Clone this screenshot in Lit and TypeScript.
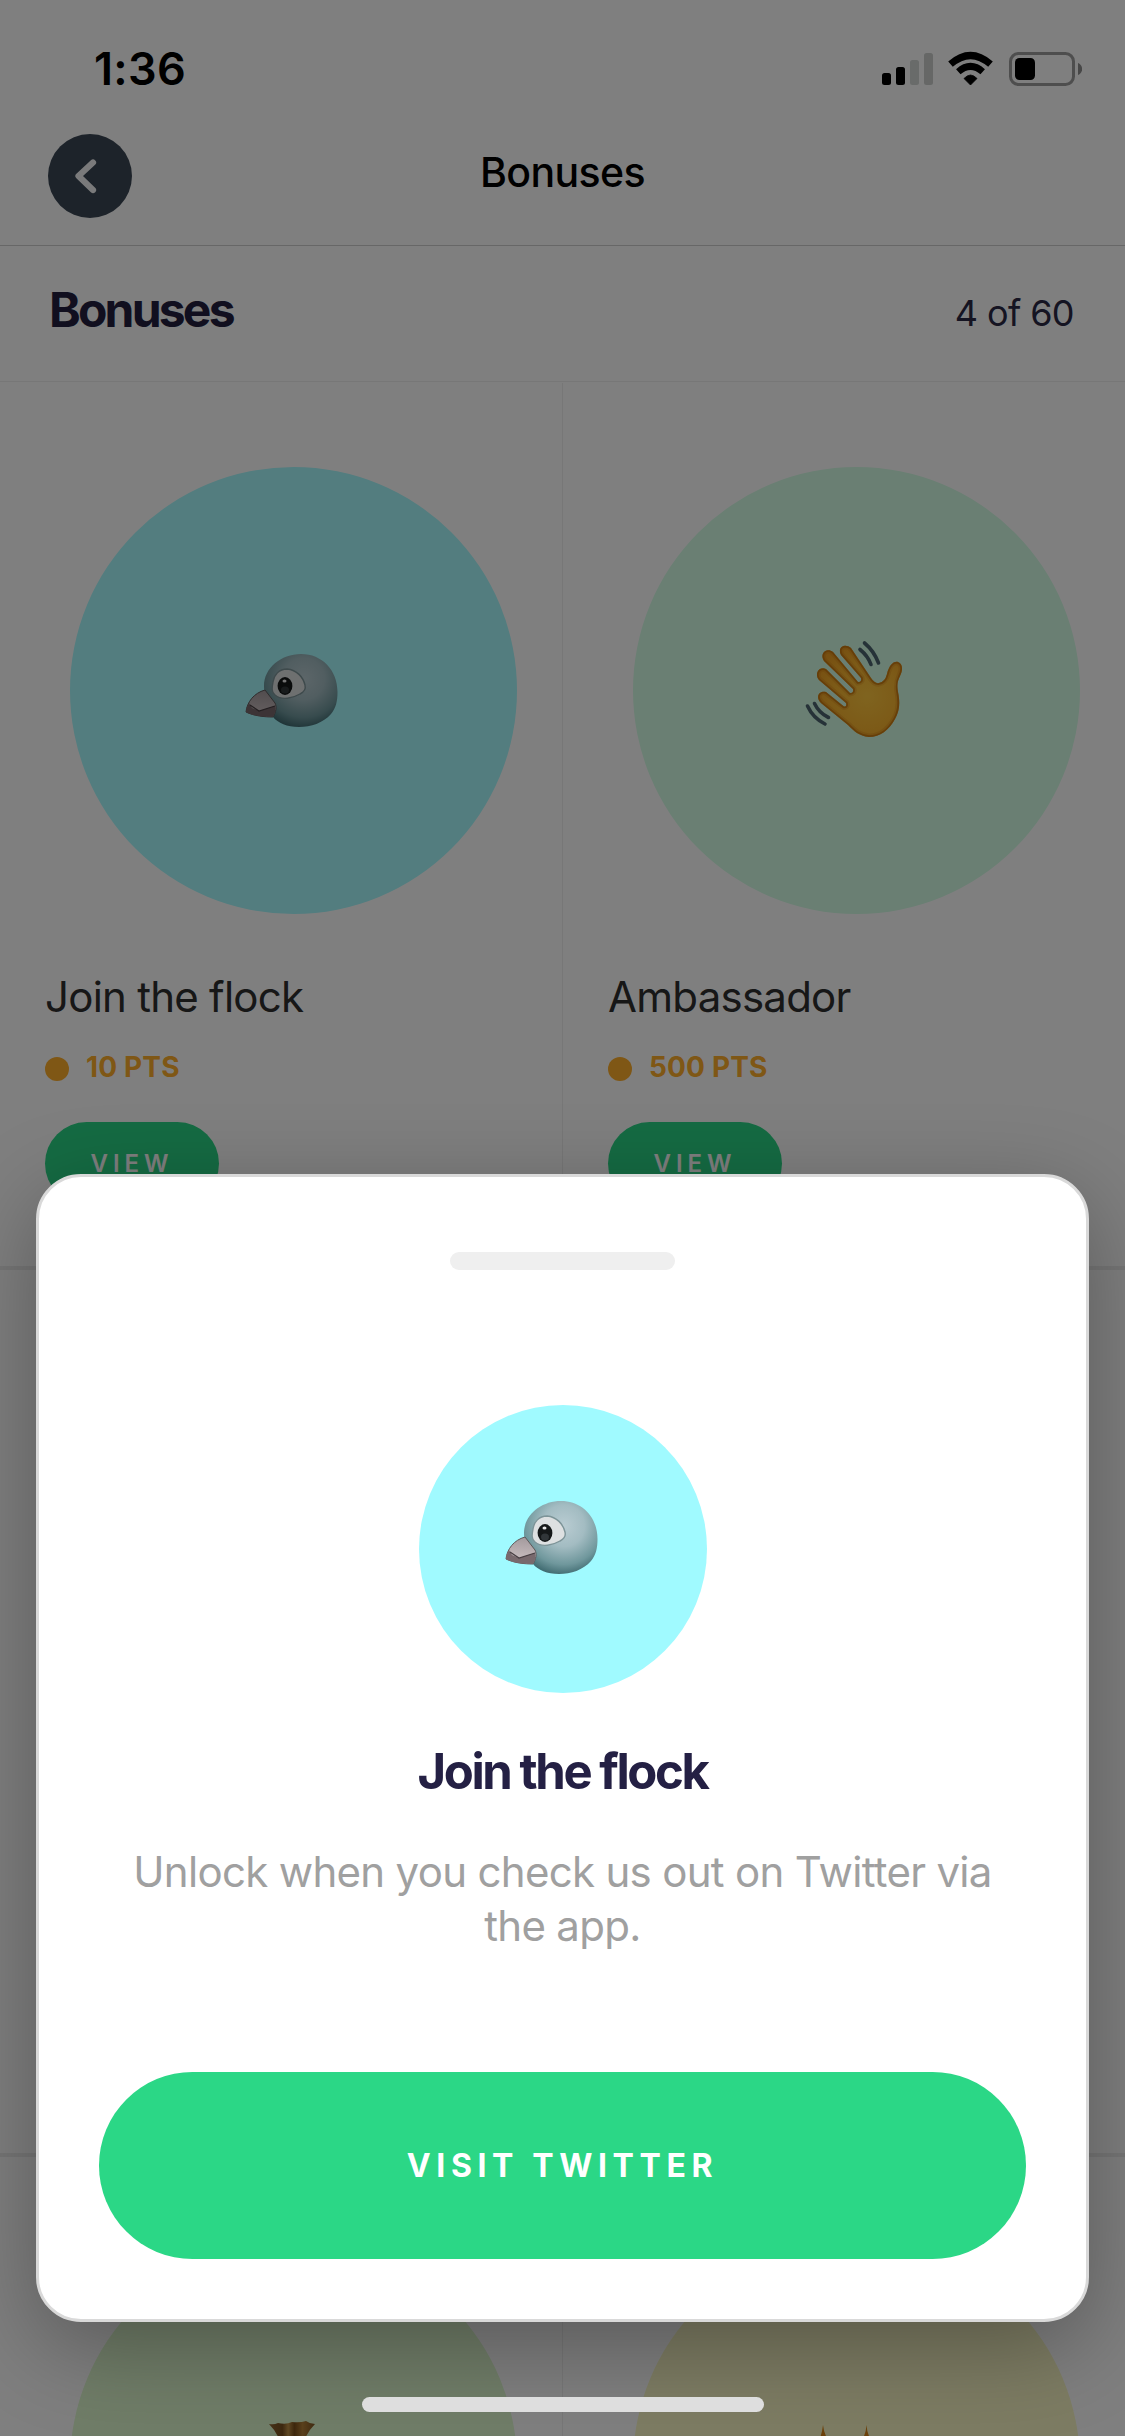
import { LitElement, html, css, svg } from "lit";
import { customElement, property } from "lit/decorators.js";

const bird = html`<svg class="bird" viewBox="0 0 94 76" width="94" height="76">
  <defs>
    <radialGradient id="head" cx="0.54" cy="0.34" r="0.68">
      <stop offset="0" stop-color="#b9ccd2" />
      <stop offset="0.42" stop-color="#a3bcc2" />
      <stop offset="0.78" stop-color="#6f979c" />
      <stop offset="1" stop-color="#3f6a70" />
    </radialGradient>
    <linearGradient id="beak" x1="0.5" y1="0" x2="0.4" y2="1">
      <stop offset="0" stop-color="#a39a9d" />
      <stop offset="1" stop-color="#cfc3c5" />
    </linearGradient>
  </defs>
  <path d="M56 1C77 1 92.500 17 92.500 39C92.500 48 91 55 86 61C78 70 66 74 54 74C42 74 33 70 28 64C30 58 30 54 27 50C21 44 19 39 19 33C19 15 36 1 56 1Z" fill="url(#head)" />
  <path d="M28 29C29 22 34 16 42 16C52 17 58 24 60 32C61 36 59 39 55 41C48 45 37 48 30 42C26 39 27 34 28 29Z" fill="#dde0e1" stroke="#7d9498" stroke-width="1.4" />
  <path d="M20 37C9 40 2 49 1 59C9 63 20 64 28 64C31 59 32 54 30 50Z" fill="url(#beak)" stroke="#5d5759" stroke-width="1" />
  <path d="M4 50L7 55L14 58L30 53C31 57 30 61 28 64C18 64 8 63 1 59C1 56 2 53 4 50Z" fill="#78696d" />
  <path d="M5 52L14 58L30 53" fill="none" stroke="#473e42" stroke-width="1.3" />
  <ellipse cx="40" cy="33" rx="7.4" ry="9" fill="#151819" />
  <ellipse cx="39.500" cy="28" rx="2" ry="1.600" fill="#fff" opacity=".9" />
  <ellipse cx="40" cy="37" rx="4" ry="3.600" fill="#454b4e" opacity=".6" />
</svg>`;

const handOutline =
  "M74 43Q80 42 82 34C84 26 88 21 93 22C98 24 98 30 95 36C92 42 92 46 93 52C95 62 95 70 90 79C84 90 75 97 64 97C54 96 49 91 43 85L16 63C10 57 14 50 21 52L39 66.500Q42 67 41 63L14 40C9 34 14 26 21 29L45 53Q49 53 48 49L19 21C14 13 22 7 28 12L53 42Q57 42 56 38L36 15C32 7 40 3 46 8L66 38Q70 44 74 43Z";

const wave = html`<svg class="wave" viewBox="0 0 100 98" width="100" height="98">
  <defs>
    <radialGradient id="palm" gradientUnits="userSpaceOnUse" cx="62" cy="56" r="56">
      <stop offset="0" stop-color="#ffc83f" />
      <stop offset="0.6" stop-color="#f9b52f" />
      <stop offset="1" stop-color="#ee9f22" />
    </radialGradient>
    <clipPath id="handClip"><path d=${handOutline} /></clipPath>
  </defs>
  <path d=${handOutline} fill="url(#palm)" />
  <g clip-path="url(#handClip)" fill="none" stroke="#c26f0c">
    <path d=${handOutline} stroke-width="7" opacity=".22" />
    <path d=${handOutline} stroke-width="3.500" opacity=".7" />
  </g>
  <g fill="none" stroke="#4d6570" stroke-width="3.600" stroke-linecap="round">
    <path d="M59.500 3Q69 11 73.500 23" /><path d="M55 9.500Q63 16 66 24.500" />
    <path d="M2.500 66Q8 78 20 84" /><path d="M9.500 63.500Q14 73 23.500 77.500" />
  </g>
</svg>`;

const moneyBag = html`<svg class="bag" viewBox="0 0 48 90" width="48" height="90">
  <defs>
    <linearGradient id="sack" x1="0" x2="1" y1="0" y2="0">
      <stop offset="0" stop-color="#8f6431" /><stop offset="0.3" stop-color="#7b5222" />
      <stop offset="0.42" stop-color="#c0924a" /><stop offset="0.55" stop-color="#7d501c" />
      <stop offset="0.72" stop-color="#b5823a" /><stop offset="1" stop-color="#7b5222" />
    </linearGradient>
  </defs>
  <path d="M1 3Q6 4 10 2Q18 4 24 1Q32 2 38 0Q42 3 47 3Q38 12 34 26L48 70V90H0V70L14 26Q10 12 1 3Z" fill="url(#sack)" />
</svg>`;

const crown = html`<svg class="spikes" viewBox="0 0 50 80" width="50" height="80">
  <path d="M3 0Q4 8 7 13L25 40L43 13Q46 8 46.500 0Q47 8 50 13V80H0V13Q2 8 3 0Z" fill="#d98518" />
</svg>`;

interface Bonus {
  name: string;
  points: string;
  tint: string;
  art: unknown;
}

const BONUSES: Bonus[] = [
  { name: "Join the flock", points: "10 PTS", tint: "aqua", art: bird },
  { name: "Ambassador", points: "500 PTS", tint: "mint", art: wave },
  { name: "", points: "", tint: "", art: null },
  { name: "", points: "", tint: "", art: null },
  { name: "", points: "", tint: "sage", art: moneyBag },
  { name: "", points: "", tint: "sand", art: crown },
];

@customElement("bonus-card")
class BonusCard extends LitElement {
  @property({ attribute: false }) bonus!: Bonus;

  static styles = css`
    :host { display: block; box-sizing: border-box; height: 887px; padding: 84px 45px 0; border-bottom: 4px solid #ececec; }
    .disc { width: 447px; height: 447px; margin-left: 25px; border-radius: 50%; display: flex; align-items: center; justify-content: center; }
    .aqua { background: #a6faff; }
    .mint { background: #d4ffe6; }
    .sage { background: #e0fad0; }
    .sand { background: #faf9c6; }
    .bird { margin: 1px 3px 0 0; }
    .wave { margin: 0 3px 4px 0; }
    .bag { margin: 2px 4px 0 0; }
    .spikes { margin: 0 23px 0 0; }
    .name { margin-top: 57px; height: 52px; line-height: 52px; font-size: 42px; color: #2e2e2e; white-space: nowrap; letter-spacing: -0.75px; }
    .points { display: flex; align-items: center; gap: 17px; height: 34px; margin-top: 27px; font-size: 28px; font-weight: 700; letter-spacing: 0.15px; color: #ffae2b; }
    .dot { width: 24px; height: 24px; margin-top: 3px; border-radius: 50%; background: #ffae2b; }
    .view { width: 174px; height: 83px; margin-top: 38px; border-radius: 42px; border: 0; padding: 0; background: #2bd786; color: #fff;
      font: 600 24px/83px Inter, sans-serif; letter-spacing: 5px; display: block; text-align: center; }
  `;

  render() {
    const b = this.bonus;
    return html`
      ${b.tint ? html`<div class="disc ${b.tint}">${b.art}</div>` : null}
      ${b.name
        ? html`<div class="name">${b.name}</div>
            <div class="points"><span class="dot"></span><span>${b.points}</span></div>
            <button class="view">VIEW</button>`
        : null}
    `;
  }
}

@customElement("app-root")
class AppRoot extends LitElement {
  static styles = css`
    :host { display: block; font-family: Inter, "Liberation Sans", sans-serif; }
    .screen { position: relative; width: 1125px; height: 2436px; overflow: hidden; background: #fff; }
    .status { display: flex; justify-content: space-between; align-items: flex-start; height: 132px; padding: 0 43px 0 94px; box-sizing: border-box; }
    .time { margin-top: 42px; font-size: 45px; line-height: 54px; font-weight: 600; letter-spacing: 0.3px; color: #000; }
    .indicators { margin-top: 50px; }
    .nav { display: grid; grid-template-columns: 84px 1fr 84px; align-items: start; height: 114px; box-sizing: border-box; padding: 2px 48px 0; border-bottom: 1px solid #cfcfcf; }
    .back { width: 84px; height: 84px; border-radius: 50%; background: #3b4755; }
    .nav-title { margin-top: 12px; text-align: center; font-size: 41px; line-height: 52px; font-weight: 500; letter-spacing: -0.6px; color: #000; }
    .section { display: flex; justify-content: space-between; height: 136px; box-sizing: border-box; padding: 0 51px 0 49px; border-bottom: 1px solid #efefef; }
    .heading { margin-top: 34px; font-size: 48px; line-height: 60px; font-weight: 700; letter-spacing: -2.800px; color: #221e3f; }
    .count { margin-top: 44px; font-size: 36px; line-height: 46px; letter-spacing: -0.600px; color: #2b2845; }
    .grid { display: grid; grid-template-columns: 1fr 1fr; margin-top: 1px; }
    .odd { border-right: 1px solid #eeeeee; }
    .scrim { position: absolute; inset: 0; background: rgba(0, 0, 0, 0.5); }
    .sheet { position: absolute; left: 36px; top: 1174px; width: 1053px; height: 1148px; box-sizing: border-box; padding: 75px 60px 0;
      border: 3px solid #d9d9d9; border-radius: 45px; background: #fff; box-shadow: 0 24px 90px rgba(0, 0, 0, 0.3);
      display: flex; flex-direction: column; align-items: center; }
    .handle { width: 225px; height: 18px; border-radius: 9px; background: #efefef; flex: none; }
    .avatar { display: flex; justify-content: center; align-items: center; width: 288px; height: 288px; box-sizing: border-box; padding: 0 21px 22px 0; margin-top: 135px; border-radius: 50%; background: #a0faff; flex: none; }
    .title { margin-top: 49px; font-size: 49px; line-height: 60px; font-weight: 700; letter-spacing: -2.400px; color: #242044; white-space: nowrap; }
    .desc { margin-top: 43px; width: 890px; font-size: 42px; line-height: 54px; letter-spacing: -0.690px; text-align: center; color: #a0a0a0; }
    .cta { width: 927px; height: 187px; margin-top: 119px; border: 0; border-radius: 94px; padding: 0; background: #2bd786; color: #fff;
      font: 700 32px/1 Inter, sans-serif; letter-spacing: 5.600px; flex: none; }
    .home { position: absolute; left: 362px; top: 2397px; width: 402px; height: 15px; border-radius: 8px; background: #dedede; }
  `;

  render() {
    return html`
      <div class="screen">
        <div class="status">
          <span class="time">1:36</span>
          <svg class="indicators" width="202" height="38" viewBox="880 50 202 38">
            <rect x="882" y="73" width="9" height="12" rx="2.5" />
            <rect x="896" y="67" width="9" height="18" rx="2.5" />
            <rect x="910" y="60" width="9" height="25" rx="2.5" fill="#d2d6d4" />
            <rect x="924" y="53" width="9" height="32" rx="2.5" fill="#cccfcd" />
            ${svg`<path d="M970.5 85L964 78.5Q970.5 71.5 977 78.5Z" stroke="#000" stroke-width=".8" stroke-linejoin="round" />
              <path d="M958.3 71.7Q970.5 61 982.7 71.7" fill="none" stroke="#000" stroke-width="6.8" />
              <path d="M950.5 64.2Q970.5 46.8 990.5 64.2" fill="none" stroke="#000" stroke-width="7" />`}
            <rect x="1010.5" y="53.5" width="63" height="31" rx="8" fill="none" stroke="#9c9c9c" stroke-width="3" />
            <rect x="1015" y="58" width="20" height="22" rx="4.5" />
            <path d="M1078 63C1083.5 65 1083.5 73 1078 75Z" fill="#8e8e8e" />
          </svg>
        </div>
        <div class="nav">
          <svg class="back" viewBox="0 0 84 84">
            <path d="M45 28.500L30.500 42L45 56" fill="none" stroke="#fff" stroke-opacity=".95" stroke-width="6.200" stroke-linecap="round" stroke-linejoin="round" />
          </svg>
          <div class="nav-title">Bonuses</div>
        </div>
        <div class="section">
          <div class="heading">Bonuses</div>
          <div class="count">4 of 60</div>
        </div>
        <div class="grid">
          ${BONUSES.map((b, i) => html`<bonus-card class=${i % 2 ? "even" : "odd"} .bonus=${b}></bonus-card>`)}
        </div>
        <div class="scrim"></div>
        <div class="sheet">
          <div class="handle"></div>
          <div class="avatar">${bird}</div>
          <div class="title">Join the flock</div>
          <div class="desc">Unlock when you check us out on Twitter via the app.</div>
          <button class="cta">VISIT TWITTER</button>
        </div>
        <div class="home"></div>
      </div>
    `;
  }
}
